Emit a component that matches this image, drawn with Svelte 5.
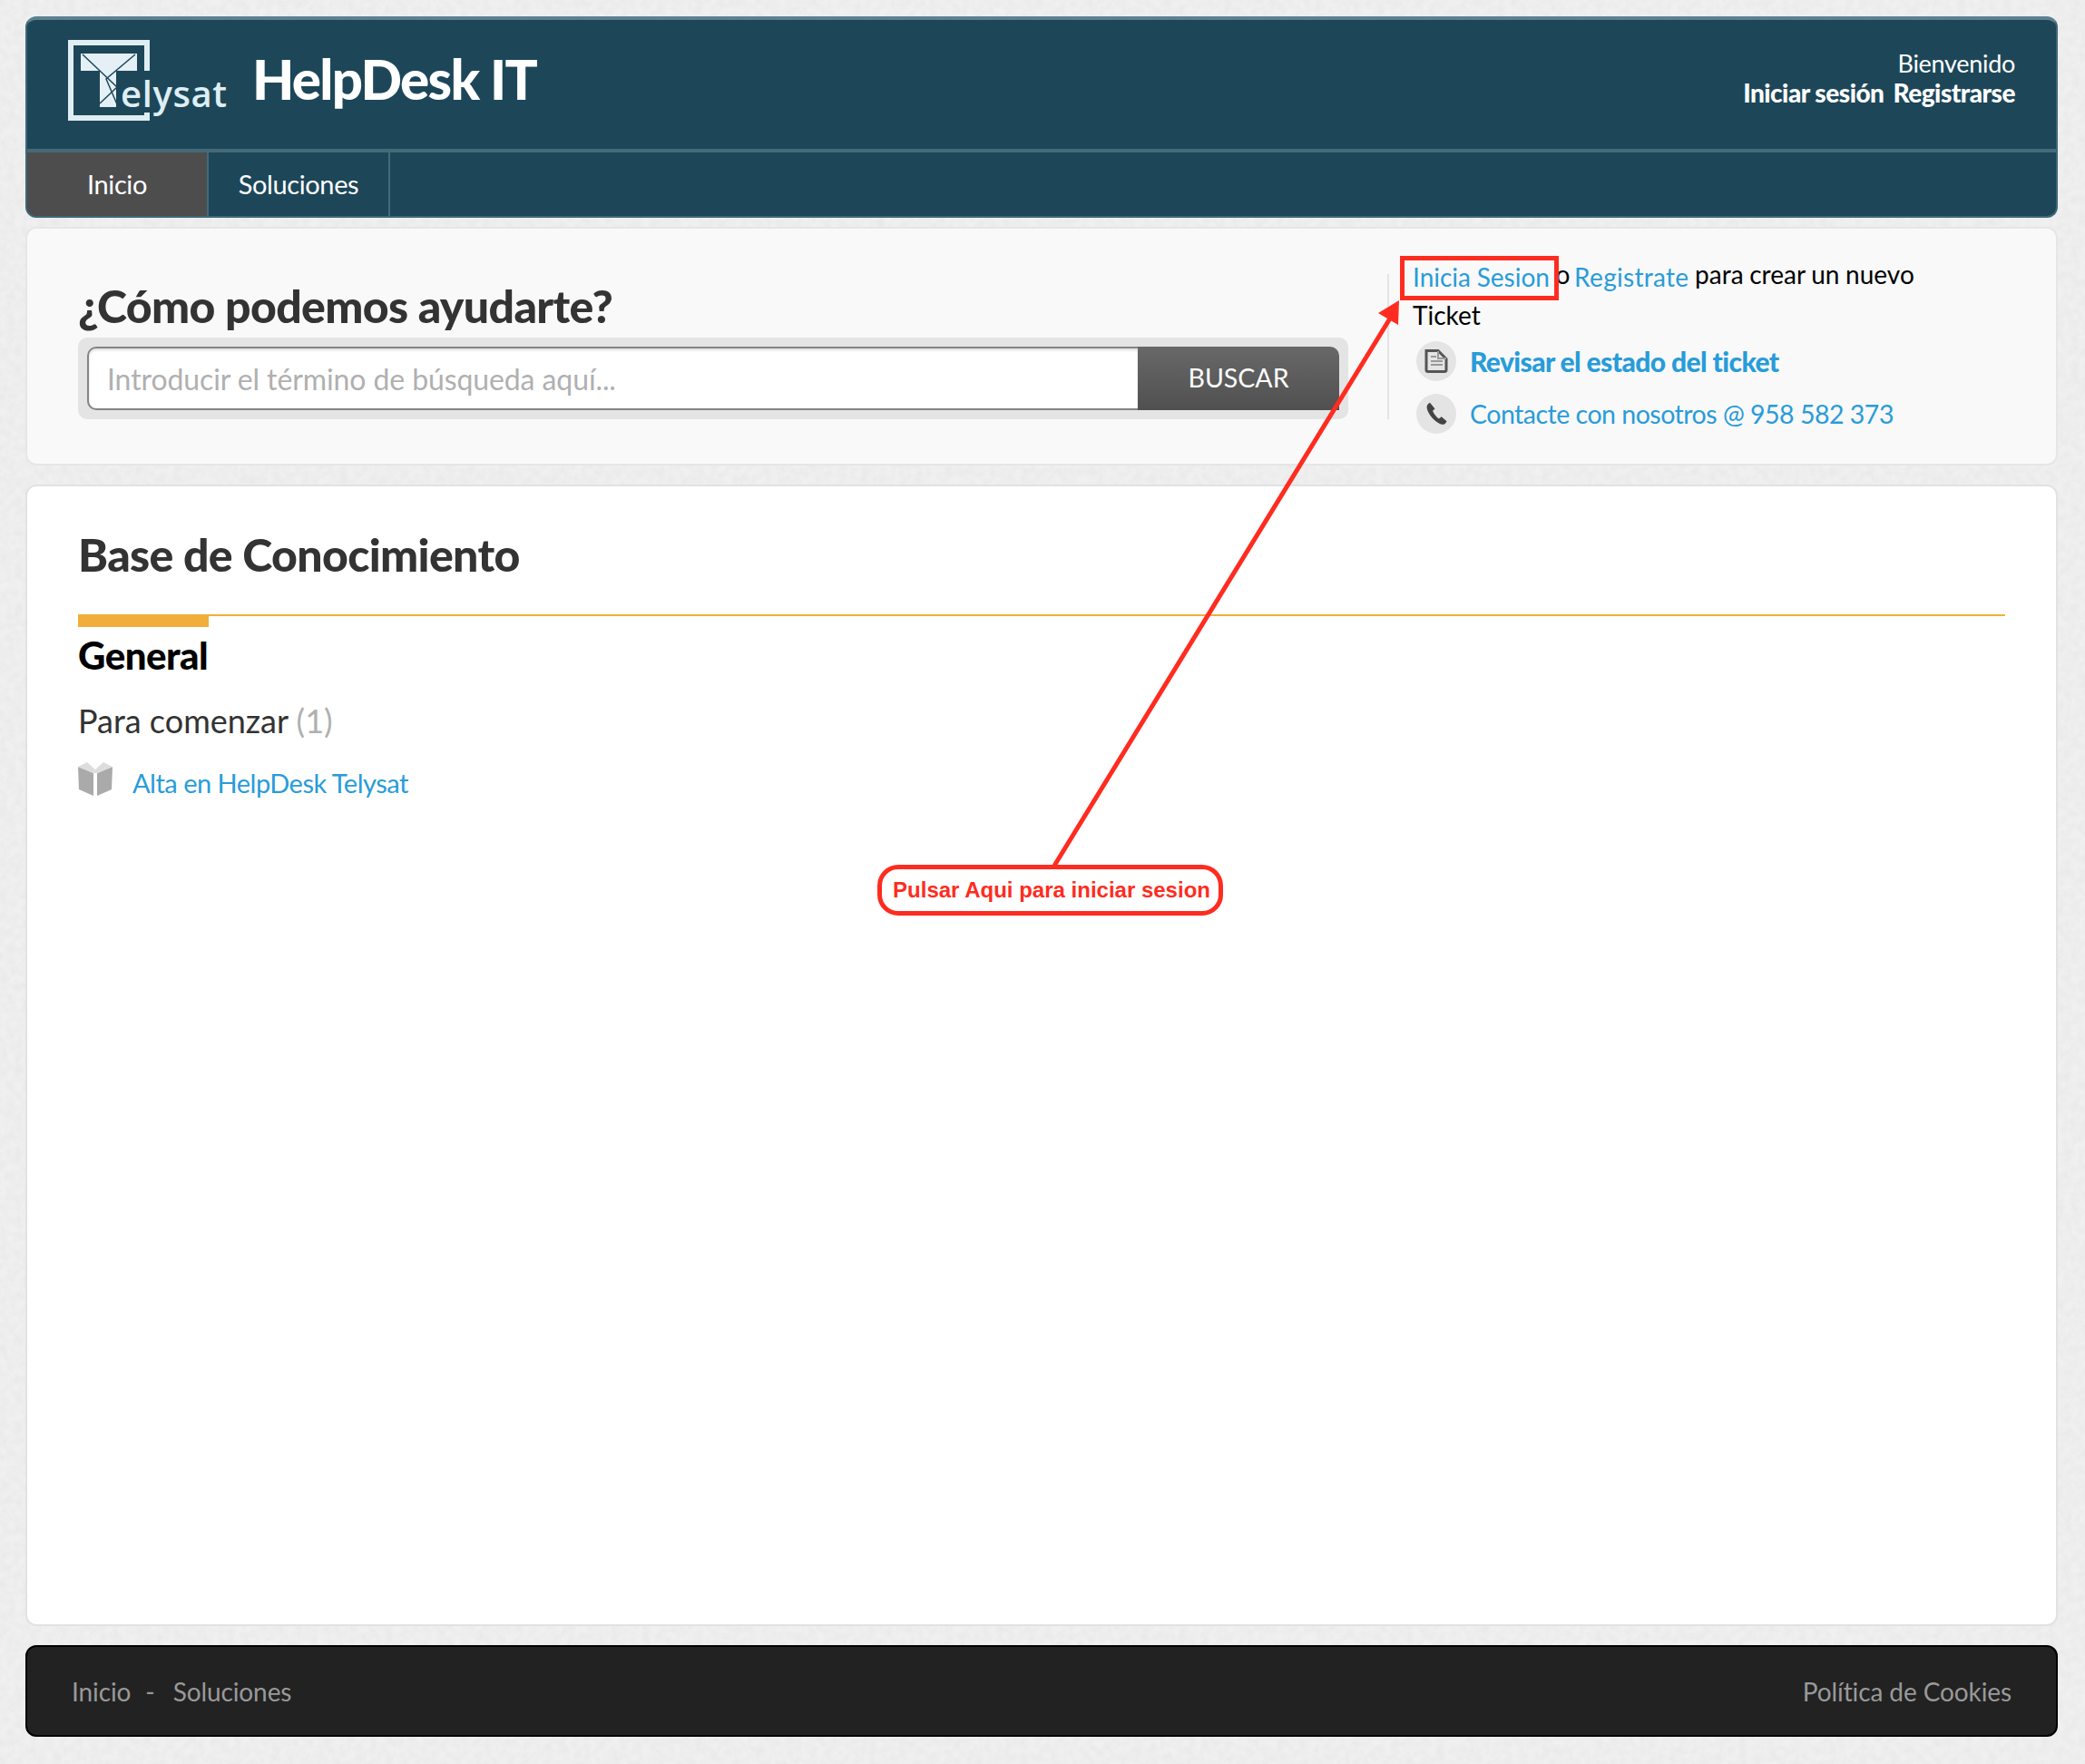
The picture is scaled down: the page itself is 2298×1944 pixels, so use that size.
<script>
  let nav = ["Inicio", "Soluciones"];
</script>

<svg class="grain" width="2298" height="1944">
  <filter id="paper">
    <feTurbulence type="fractalNoise" baseFrequency="0.12" numOctaves="3" seed="4" />
    <feColorMatrix values="0 0 0 0 0.5  0 0 0 0 0.5  0 0 0 0 0.5  0.22 0 0 0 -0.06" />
  </filter>
  <rect width="2298" height="1944" filter="url(#paper)" />
</svg>

<div class="page">
  <header class="top">
    <div class="brand">
      <div class="logo">
        <svg width="176" height="92" viewBox="0 0 176 92">
          <path d="M87 34V3H3v83h84v-6" fill="none" stroke="#dfeef3" stroke-width="6" />
          <path d="M14 15h62v19H53v40H35V34H14z" fill="#e4f0f6" />
          <path d="M16 16l38 36-19 18M74 16L42 43l12 28" fill="none" stroke="#1d4759" stroke-width="1.5" />
          <text x="58" y="74" class="word">elysat</text>
        </svg>
      </div>
      <h1>HelpDesk IT</h1>
      <div class="welcome">
        <div>Bienvenido</div>
        <div class="auth"><a href="#a">Iniciar sesión</a><a href="#a">Registrarse</a></div>
      </div>
    </div>
    <nav>
      {#each nav as item, i}
        <a href="#a" class:active={i === 0}>{item}</a>
      {/each}
    </nav>
  </header>

  <section class="search">
    <div class="ask">
      <h2>¿Cómo podemos ayudarte?</h2>
      <form class="bar">
        <input type="text" placeholder="Introducir el término de búsqueda aquí..." />
        <button type="button">BUSCAR</button>
      </form>
    </div>
    <div class="sep"></div>
    <div class="help">
      <p class="intro">
        <a href="#a">Inicia Sesion</a> o <a href="#a">Registrate</a> para crear un nuevo Ticket
      </p>
      <div class="row">
        <span class="circle">
          <svg width="28" height="28" viewBox="0 0 28 28">
            <path d="M3 2.500h13l9 9v12a2 2 0 0 1-2 2H5a2 2 0 0 1-2-2z" fill="none" stroke="#555" stroke-width="3" />
            <path d="M8 9h6M8 14h13M8 18h13M16 3v8h9" fill="none" stroke="#999" stroke-width="2" />
          </svg>
        </span>
        <a href="#a" class="strong">Revisar el estado del ticket</a>
      </div>
      <div class="row">
        <span class="circle">
          <svg width="28" height="28" viewBox="0 0 24 24">
            <path d="M6 1.500C4 2.500 2.600 4.500 3.200 7c1.600 6 7 12.500 13.800 15 2 .6 3.900-.6 4.900-3l-5-4.300-2.500 2c-2.400-1.500-4.800-4.700-5.800-7.400l2.100-2z" fill="#444" />
          </svg>
        </span>
        <a href="#a">Contacte con nosotros @ 958 582 373</a>
      </div>
    </div>
  </section>

  <main class="kb">
    <h2>Base de Conocimiento</h2>
    <div class="rule"></div>
    <h3>General</h3>
    <h4>Para comenzar <span>(1)</span></h4>
    <div class="article">
      <svg width="38" height="37" viewBox="0 0 38 37">
        <path d="M0 5l17 7v25L1 30z" fill="#aaa" />
        <path d="M38 5l-17 7v25l16-7z" fill="#aaa" />
        <path d="M0 5l10-5 9 8 9-8 10 5-17 7h-4z" fill="#ddd" />
      </svg>
      <a href="#a">Alta en HelpDesk Telysat</a>
    </div>
  </main>

  <footer>
    <div class="links">
      <a href="#a">Inicio</a><span>-</span><a href="#a">Soluciones</a>
    </div>
    <a href="#a">Política de Cookies</a>
  </footer>
</div>

<svg class="marks" width="2298" height="1944" viewBox="0 0 2298 1944">
  <rect x="1545.500" y="284.500" width="170" height="44" fill="none" stroke="#fe2c20" stroke-width="5" />
  <path d="M1162 954L1532 351" stroke="#fe2c20" stroke-width="5" fill="none" />
  <path d="M1542 331L1519 345L1541 358z" fill="#fe2c20" />
</svg>
<div class="callout">Pulsar Aqui para iniciar sesion</div>

<style>
  :global(body) {
    margin: 0;
    background: #f0f0f0;
    font-family: Lato, "Liberation Sans", sans-serif;
  }

  a {
    color: #289cd9;
    text-decoration: none;
  }

  .grain {
    position: absolute;
    left: 0;
    top: 0;
    z-index: -1;
  }

  .page {
    box-sizing: border-box;
    width: 2298px;
    height: 1944px;
    padding: 18px 30px 0 28px;
    display: flex;
    flex-direction: column;
  }

  .top {
    height: 222px;
    box-sizing: border-box;
    background: #1d4759;
    border: 2px solid #3f6778;
    border-top: 4px solid #5d8090;
    border-radius: 12px;
    overflow: hidden;
    display: flex;
    flex-direction: column;
  }

  .brand {
    height: 146px;
    box-sizing: border-box;
    display: flex;
    align-items: flex-start;
    padding: 22px 45px 0 45px;
    color: #fff;
    border-bottom: 4px solid #446a78;
  }

  .logo {
    height: 92px;
  }

  .word {
    font-family: "Open Sans", sans-serif;
    font-size: 40px;
    letter-spacing: 0.6px;
    font-weight: 600;
    fill: #dfeef3;
  }

  h1 {
    margin: 0 0 0 27px;
    padding-top: 7px;
    font-size: 60px;
    line-height: 72px;
    font-weight: 900;
    letter-spacing: -1.7px;
    color: #fff;
  }

  .welcome {
    margin-left: auto;
    padding-top: 10px;
    text-align: right;
    font-size: 27px;
    line-height: 32px;
    letter-spacing: -0.3px;
  }

  .auth {
    font-size: 28px;
    font-weight: 900;
    letter-spacing: -0.5px;
  }

  .auth a {
    color: #fff;
    margin-left: 10px;
  }

  nav {
    display: flex;
    flex: 1;
  }

  nav a {
    width: 200px;
    display: flex;
    align-items: center;
    justify-content: center;
    color: #fff;
    font-size: 29px;
    letter-spacing: -0.4px;
    border-right: 2px solid #446a78;
    box-sizing: border-box;
    padding-bottom: 2px;
  }

  nav a.active {
    background: #4d4d4d;
  }

  .search {
    height: 263px;
    box-sizing: border-box;
    margin-top: 10px;
    background: #f9f9f9;
    border: 2px solid #e6e6e6;
    border-radius: 12px;
    display: flex;
    padding-left: 56px;
  }

  .ask {
    width: 1400px;
    padding-top: 52px;
  }

  .ask h2 {
    margin: 0;
    font-size: 50px;
    line-height: 66px;
    font-weight: 900;
    letter-spacing: -0.65px;
    color: #333;
  }

  .bar {
    margin-top: 2px;
    height: 90px;
    box-sizing: border-box;
    background: #e4e4e4;
    border-radius: 10px;
    padding: 10px;
    display: flex;
  }

  input {
    flex: 1;
    min-width: 0;
    box-sizing: border-box;
    height: 70px;
    border: 2px solid #848484;
    border-right: 0;
    border-radius: 10px 0 0 10px;
    background: #fff;
    box-shadow: inset 0 2px 3px #ddd;
    padding: 0 20px;
    font-family: inherit;
    font-size: 32px;
    letter-spacing: -0.1px;
    outline: none;
  }

  input::placeholder {
    color: #b0b0b0;
    opacity: 1;
  }

  button {
    width: 222px;
    height: 70px;
    border: 0;
    border-radius: 0 10px 0 0;
    background: linear-gradient(#686868, #505050);
    color: #fff;
    font-family: inherit;
    font-size: 28.5px;
    padding: 0 0 3px;
  }

  .sep {
    width: 2px;
    height: 160px;
    margin: 50px 0 0 43px;
    background: #e4e4e4;
  }

  .help {
    width: 600px;
    margin-left: 26px;
    padding-top: 28px;
    font-size: 28px;
    line-height: 45px;
    color: #000;
  }

  .intro {
    margin: 0;
    width: 570px;
    word-spacing: -0.5px;
  }

  .intro a {
    position: relative;
    top: 3px;
  }

  .intro a + a {
    margin-left: -2px;
    letter-spacing: 0.3px;
  }

  .row {
    display: flex;
    align-items: center;
    gap: 15px;
    height: 44px;
    margin: 0 0 14px 4px;
    font-size: 28.5px;
    letter-spacing: -0.5px;
  }

  .intro + .row {
    margin-top: 6px;
  }

  .circle {
    width: 44px;
    height: 44px;
    border-radius: 50%;
    background: #e4e4e4;
    display: flex;
    align-items: center;
    justify-content: center;
  }

  .strong {
    font-size: 30px;
    font-weight: 900;
    letter-spacing: -0.6px;
  }

  .kb {
    height: 1258px;
    box-sizing: border-box;
    margin-top: 21px;
    background: #fff;
    border: 2px solid #e2e2e2;
    border-radius: 12px;
    padding: 0 56px;
  }

  .kb h2 {
    margin: 0;
    padding-top: 42px;
    font-size: 50px;
    line-height: 66px;
    font-weight: 900;
    letter-spacing: -0.65px;
    color: #333;
  }

  .rule {
    margin-top: 33px;
    height: 2px;
    background: #f2ae3a;
    position: relative;
  }

  .rule::before {
    content: "";
    position: absolute;
    left: 0;
    top: 0;
    width: 144px;
    height: 14px;
    background: #f2ae3a;
  }

  h3 {
    margin: 18px 0 0;
    font-size: 42px;
    line-height: 50px;
    font-weight: 900;
    letter-spacing: -0.5px;
    color: #000;
  }

  h4 {
    margin: 24px 0 0;
    font-size: 36px;
    line-height: 46px;
    font-weight: 400;
    color: #333;
  }

  h4 span {
    color: #b0b0b0;
  }

  .article {
    display: flex;
    align-items: flex-start;
    gap: 22px;
    margin-top: 23px;
    font-size: 29px;
    line-height: 46px;
    letter-spacing: -0.5px;
  }

  footer {
    height: 101px;
    box-sizing: border-box;
    margin-top: 21px;
    background: #222;
    border: 2px solid #000;
    border-radius: 12px;
    padding: 0 49px;
    display: flex;
    align-items: center;
    justify-content: space-between;
    font-size: 28px;
    color: #999;
    letter-spacing: -0.1px;
  }

  footer a {
    color: #999;
  }

  .links span {
    margin: 0 20px 0 16px;
  }

  .marks {
    position: absolute;
    left: 0;
    top: 0;
    pointer-events: none;
  }

  .callout {
    position: absolute;
    left: 967px;
    top: 953px;
    width: 381px;
    height: 56px;
    box-sizing: border-box;
    border: 5px solid #fe2c20;
    border-radius: 23px;
    background: #fff;
    color: #fe2c20;
    font-family: "Liberation Sans", Arial, sans-serif;
    font-size: 24px;
    font-weight: 700;
    display: flex;
    align-items: center;
    justify-content: center;
    padding-left: 3px;
  }
</style>
